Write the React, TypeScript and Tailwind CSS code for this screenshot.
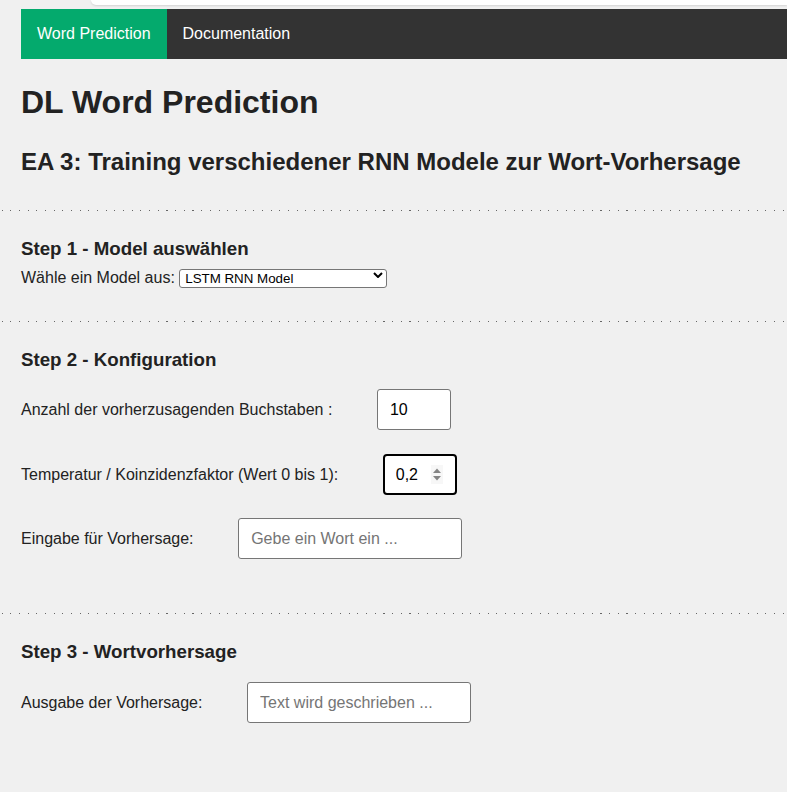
import React from 'react'

const font = "font-['Liberation_Sans',Arial,Helvetica,sans-serif]"

function Dotted({ className = '' }: { className?: string }) {
  return (
    <div
      className={`h-px w-full bg-[repeating-linear-gradient(to_right,transparent_0_1.5px,#666_1.5px_2.6px,transparent_2.6px_8.68px)] ${className}`}
    />
  )
}

function Row({ label, children, className = '' }: { label: string; children: React.ReactNode; className?: string }) {
  return (
    <div className={`flex items-center gap-[44.6px] ${className}`}>
      <label className="text-[16px] leading-[19px] text-[#222]">{label}</label>
      {children}
    </div>
  )
}

export default function App() {
  return (
    <div className={`min-h-[792px] bg-[#f0f0f0] ${font} text-[#222]`}>
      {/* top strip */}
      <div className="h-[9px]">
        <div className="ml-[91px] h-[5px] rounded-bl-[6px] bg-white shadow-[0_1px_2px_rgba(0,0,0,0.12)]" />
      </div>

      {/* nav */}
      <nav className="ml-[21px] flex h-[50px] bg-[#333]">
        <a className="flex items-center bg-[#04AA6D] px-4 text-[16px] text-white">Word Prediction</a>
        <a className="flex items-center px-4 text-[16px] text-white">Documentation</a>
      </nav>

      <div className="px-[21px]">
        <h1 className="mt-[25px] text-[32px] font-bold leading-[37px]">DL Word Prediction</h1>
        <h2 className="mt-[27px] text-[24px] font-bold leading-[28px]">
          EA 3: Training verschiedener RNN Modele zur Wort-Vorhersage
        </h2>
      </div>

      <Dotted className="mt-[34px]" />

      {/* Step 1 */}
      <div className="px-[21px]">
        <h3 className="mt-[27px] text-[18.72px] font-bold leading-[22px]">Step 1 - Model auswählen</h3>
        <div className="mt-[8px] flex h-[19px] items-center gap-[4.4px]">
          <label className="text-[16px] leading-[19px]">Wähle ein Model aus:</label>
          <div className="relative">
            <select className="h-[19px] w-[208px] appearance-none rounded-[3px] border border-[#767676] bg-white pl-[5px] text-[13.33px] leading-[17px] text-black">
              <option>LSTM RNN Model</option>
              <option>GRU RNN Model</option>
            </select>
            <svg className="pointer-events-none absolute right-[4px] top-[6px]" width="10" height="6" viewBox="0 0 10 6">
              <path d="M1 1 L5 5 L9 1" fill="none" stroke="#000" strokeWidth="2" />
            </svg>
          </div>
        </div>
      </div>

      <Dotted className="mt-[34px]" />

      {/* Step 2 */}
      <div className="px-[21px]">
        <h3 className="mt-[27px] text-[18.72px] font-bold leading-[22px]">Step 2 - Konfiguration</h3>

        <Row label="Anzahl der vorherzusagenden Buchstaben :" className="mt-[18px]">
          <input
            defaultValue="10"
            className="h-[41px] w-[74px] rounded-[3px] border border-[#767676] bg-white px-[12px] text-[16px] text-black outline-none"
          />
        </Row>

        <Row label="Temperatur / Koinzidenzfaktor (Wert 0 bis 1):" className="mt-[24px]">
          <div className="relative">
            <input
              defaultValue="0,2"
              className="h-[41px] w-[74px] rounded-[4px] border-2 border-black bg-white px-[11px] text-[16px] text-black outline-none"
            />
            <div className="pointer-events-none absolute left-[48px] top-[11px] flex h-[19px] w-[12px] items-center justify-center bg-[#f7f7f7]">
              <svg width="10" height="15" viewBox="0 0 10 15">
                <path d="M1 6 L5 1.5 L9 6 Z" fill="#858585" />
                <path d="M1 9 L5 13.5 L9 9 Z" fill="#858585" />
              </svg>
            </div>
          </div>
        </Row>

        <Row label="Eingabe für Vorhersage:" className="mt-[23px]">
          <input
            placeholder="Gebe ein Wort ein ..."
            className="h-[41px] w-[224px] rounded-[3px] border border-[#767676] bg-white px-[12px] text-[16px] text-black outline-none placeholder:text-[#757575]"
          />
        </Row>
      </div>

      <Dotted className="mt-[54px]" />

      {/* Step 3 */}
      <div className="px-[21px] pb-10">
        <h3 className="mt-[27px] text-[18.72px] font-bold leading-[22px]">Step 3 - Wortvorhersage</h3>
        <Row label="Ausgabe der Vorhersage:" className="mt-[19px]">
          <input
            placeholder="Text wird geschrieben ..."
            className="h-[41px] w-[224px] rounded-[3px] border border-[#767676] bg-white px-[12px] text-[16px] text-black outline-none placeholder:text-[#757575]"
          />
        </Row>
      </div>
    </div>
  )
}
